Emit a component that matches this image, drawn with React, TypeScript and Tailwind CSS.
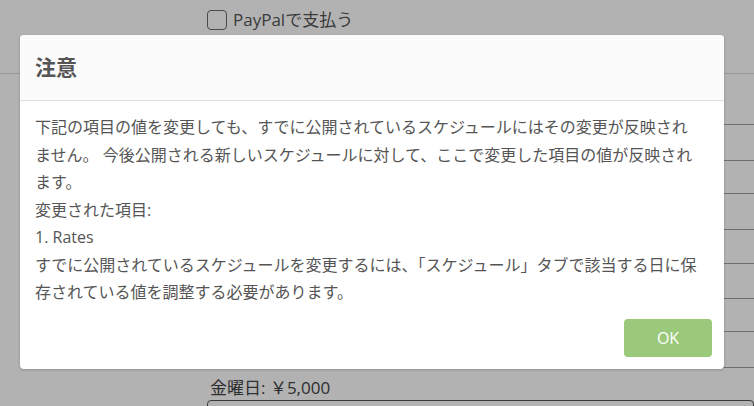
import React from "react";

const rows = [51, 36, 33, 36, 34, 35, 33, 36];

const App = () => {
  return (
    <div className="relative h-[406px] w-[754px] overflow-hidden bg-white font-['Open_Sans','Noto_Sans_CJK_JP',sans-serif]">
      {/* page behind the dialog */}
      <div className="h-[74px] border-b border-[#dbdbdb]">
        <div className="flex items-center gap-[6px] pl-[207px] pt-[7px]">
          <span className="h-[20px] w-[20px] rounded-[4px] border border-[#6a6a6a] bg-white" />
          <span className="text-[17px] text-[#555]">PayPalで支払う</span>
        </div>
      </div>
      <div className="ml-[207px]">
        {rows.map((h, i) => (
          <div key={i} className="border-b border-[#a0a0a0]" style={{ height: h }} />
        ))}
        <div className="flex h-[32px] items-end pb-[1px] pl-[3px] text-[17px] leading-[22px] text-[#444]">
          金曜日: ￥5,000
        </div>
        <div className="h-[40px] rounded-[4px] border border-[#555]" />
      </div>

      {/* modal */}
      <div className="absolute inset-0 bg-black/30 pl-[20px] pt-[35px]">
        <div className="w-[704px] overflow-hidden rounded-[4px] bg-white shadow-[0_1px_3px_rgba(0,0,0,0.2)]">
          <div className="flex h-[66px] items-center border-b border-[#dddddd] bg-[#fbfbfb] px-[15px]">
            <h4 className="text-[21px] font-bold text-[#555]">注意</h4>
          </div>
          <div className="whitespace-nowrap pl-[15px] pr-[8px] pt-[13px] text-[16px] leading-[27.5px] text-[#555]">
            <p>
              下記の項目の値を変更しても、すでに公開されているスケジュールにはその変更が反映され
              <br />
              ません。 今後公開される新しいスケジュールに対して、ここで変更した項目の値が反映され
              <br />
              ます。
            </p>
            <p>変更された項目:</p>
            <p>1. Rates</p>
            <p>
              すでに公開されているスケジュールを変更するには、「スケジュール」タブで該当する日に保
              <br />
              存されている値を調整する必要があります。
            </p>
          </div>
          <div className="flex justify-end pb-[12px] pr-[12px] pt-[12px]">
            <button className="h-[38px] w-[88px] rounded-[4px] bg-[#9bc97b] text-[16px] text-white">
              OK
            </button>
          </div>
        </div>
      </div>
    </div>
  );
};

export default App;
